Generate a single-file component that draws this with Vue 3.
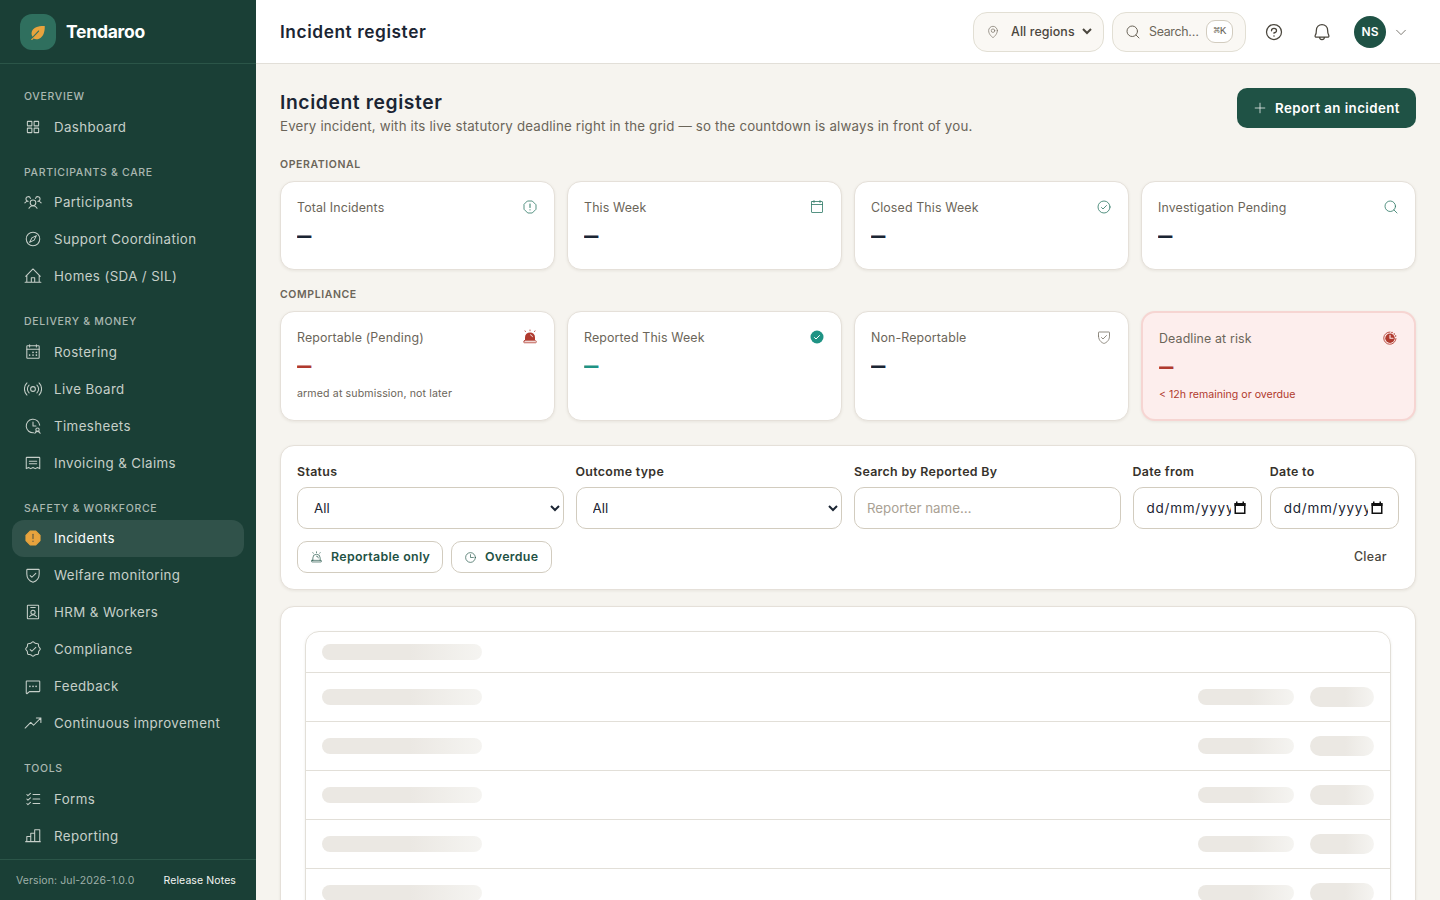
<script setup>
import { ref } from 'vue'

// icons, drawn on a 256 grid
const icons = {
  leaf: '<path d="M224 42C138 38 62 63 42 116c-11 29-5 55 8 79l80-84c9-9 20 1 12 10L56 208l-21 21c-8 9 2 19 11 11l18-18c24 13 53 13 79 2C203 198 227 124 224 42Z" fill="currentColor" stroke="none"/>',
  grid: '<rect x="48" y="48" width="64" height="64" rx="6"/><rect x="144" y="48" width="64" height="64" rx="6"/><rect x="48" y="144" width="64" height="64" rx="6"/><rect x="144" y="144" width="64" height="64" rx="6"/>',
  users: '<circle cx="128" cy="140" r="40"/><path d="M196 116a59.8 59.8 0 0 1 48 24M12 140a59.8 59.8 0 0 1 48-24M70.4 216a64.1 64.1 0 0 1 115.2 0M60 116a32 32 0 1 1 31.4-38M164.6 78A32 32 0 1 1 196 116"/>',
  compass: '<circle cx="128" cy="128" r="96"/><path d="M176 80l-32 64-64 32 32-64Z"/>',
  home: '<path d="M16 216h224M152 216v-64h-48v64M40 216V116M216 216V116M24 132 128 28l104 104"/>',
  calendarDots: '<rect x="40" y="40" width="176" height="176" rx="8"/><path d="M176 24v32M80 24v32M40 88h176"/><g fill="currentColor" stroke="none"><circle cx="128" cy="132" r="12"/><circle cx="176" cy="132" r="12"/><circle cx="80" cy="172" r="12"/><circle cx="128" cy="172" r="12"/><circle cx="176" cy="172" r="12"/></g>',
  broadcast: '<circle cx="128" cy="128" r="34"/><path d="M184 72a78 78 0 0 1 0 112M72 184a78 78 0 0 1 0-112M214 42a122 122 0 0 1 0 172M42 214a122 122 0 0 1 0-172"/>',
  clockUser: '<path d="M128 72v56h42M223 116A96 96 0 1 0 136 224"/><circle cx="192" cy="180" r="24"/><path d="M154 232a40 40 0 0 1 76 0"/>',
  receipt: '<path d="M76 104h104M76 140h104M32 208V56a8 8 0 0 1 8-8h176a8 8 0 0 1 8 8v152l-32-16-32 16-32-16-32 16-32-16Z"/>',
  octagonFill: '<path d="M91 28h74l63 63v74l-63 63H91l-63-63V91Z" fill="currentColor" stroke="currentColor"/><g stroke="#6b5f42" stroke-width="18"><path d="M128 76v60"/><path d="M128 174v2"/></g>',
  octagon: '<path d="M92 32h72l60 60v72l-60 60H92l-60-60V92Z"/><path d="M128 80v56M128 172v3" stroke-width="16"/>',
  shield: '<path d="M40 114V56a8 8 0 0 1 8-8h160a8 8 0 0 1 8 8v58c0 84-71 112-88 118-17-6-88-34-88-118Z"/><path d="m88 136 24 24 56-56"/>',
  badge: '<rect x="48" y="32" width="160" height="192" rx="8"/><circle cx="128" cy="132" r="30"/><path d="M96 64h64M80 192a58 58 0 0 1 96 0"/>',
  seal: '<path d="M54.500 201.500c-9.200-9.200-3.100-28.500-7.800-39.800S24 140.500 24 128s17.800-22 22.700-33.700-1.400-30.600 7.800-39.800S83 51.400 94.300 46.700 115.500 24 128 24s22 17.800 33.700 22.700 30.600-1.400 39.800 7.800 3.100 28.500 7.800 39.800S232 115.500 232 128s-17.800 22-22.700 33.700 1.400 30.600-7.800 39.800-28.500 3.100-39.800 7.800S140.500 232 128 232s-22-17.800-33.700-22.700-30.600 1.400-39.800-7.800Z"/><path d="m88 136 24 24 56-56"/>',
  chat: '<path d="m77 208-32 27a8 8 0 0 1-13-6V64a8 8 0 0 1 8-8h176a8 8 0 0 1 8 8v136a8 8 0 0 1-8 8Z"/><g fill="currentColor" stroke="none"><circle cx="84" cy="132" r="12"/><circle cx="128" cy="132" r="12"/><circle cx="172" cy="132" r="12"/></g>',
  trend: '<path d="m16 200 80-80 40 40 104-104M176 56h64v64"/>',
  checks: '<path d="M128 64h96M128 128h96M128 192h96M92 48 56 80 40 64M92 112l-36 32-16-16M92 176l-36 32-16-16"/>',
  bars: '<path d="M40 208v-72h56M96 208V88h56M224 208V40h-72v168M24 208h208"/>',
  calendar: '<rect x="40" y="40" width="176" height="176" rx="8"/><path d="M176 24v32M80 24v32M40 88h176"/>',
  check: '<circle cx="128" cy="128" r="96"/><path d="m88 136 24 24 56-56"/>',
  checkFill: '<circle cx="128" cy="128" r="104" fill="currentColor" stroke="none"/><path d="m88 136 24 24 56-56" stroke="#fff" stroke-width="16"/>',
  search: '<circle cx="116" cy="116" r="84"/><path d="m175 175 49 49"/>',
  siren: '<path d="M56 184v-48a72 72 0 0 1 144 0v48M128 100a36 36 0 0 1 36 36M128 16v16M200 32l-8 12M56 32l8 12"/><rect x="32" y="184" width="192" height="32" rx="8"/>',
  sirenFill: '<path d="M48 180v-46a80 80 0 0 1 160 0v46Z" fill="currentColor" stroke="none"/><path d="M136 92a40 40 0 0 1 32 32" stroke="#fff"/><path d="M128 16v12M208 30l-8 12M48 30l8 12"/><rect x="28" y="188" width="200" height="32" rx="10"/>',
  clock: '<circle cx="128" cy="128" r="96"/><path d="M128 72v56h56"/>',
  countdown: '<circle cx="128" cy="132" r="76" fill="currentColor" stroke="none"/><path d="M128 32a98 98 0 1 0 96 104" stroke-width="14"/><path d="M128 84v48h48" stroke="#fdecec" stroke-width="18"/><g fill="currentColor" stroke="none"><circle cx="160" cy="38" r="12"/><circle cx="196" cy="62" r="12"/><circle cx="218" cy="97" r="12"/></g>',
  pin: '<circle cx="128" cy="104" r="32"/><path d="M208 104c0 72-80 128-80 128s-80-56-80-128a80 80 0 0 1 160 0Z"/>',
  help: '<circle cx="128" cy="128" r="96"/><path d="M128 144v-8c18 0 32-13 32-28s-14-28-32-28-32 13-32 28v4"/><circle cx="128" cy="180" r="10" fill="currentColor" stroke="none"/>',
  bell: '<path d="M96 192a32 32 0 0 0 64 0M56 104a72 72 0 0 1 144 0c0 36 8 57 15 68 4 7-1 20-7 20H48c-6 0-11-13-7-20 8-11 15-32 15-68Z"/>',
  caret: '<path d="m208 96-80 80-80-80"/>',
  plus: '<path d="M40 128h176M128 40v176"/>',
}

const groups = [
  { title: 'Overview', items: [{ name: 'Dashboard', icon: 'grid' }] },
  {
    title: 'Participants & Care',
    items: [
      { name: 'Participants', icon: 'users' },
      { name: 'Support Coordination', icon: 'compass' },
      { name: 'Homes (SDA / SIL)', icon: 'home' },
    ],
  },
  {
    title: 'Delivery & Money',
    items: [
      { name: 'Rostering', icon: 'calendarDots' },
      { name: 'Live Board', icon: 'broadcast' },
      { name: 'Timesheets', icon: 'clockUser' },
      { name: 'Invoicing & Claims', icon: 'receipt' },
    ],
  },
  {
    title: 'Safety & Workforce',
    items: [
      { name: 'Incidents', icon: 'octagonFill' },
      { name: 'Welfare monitoring', icon: 'shield' },
      { name: 'HRM & Workers', icon: 'badge' },
      { name: 'Compliance', icon: 'seal' },
      { name: 'Feedback', icon: 'chat' },
      { name: 'Continuous improvement', icon: 'trend' },
    ],
  },
  {
    title: 'Tools',
    items: [
      { name: 'Forms', icon: 'checks' },
      { name: 'Reporting', icon: 'bars' },
    ],
  },
]

const operational = [
  { label: 'Total Incidents', icon: 'octagon' },
  { label: 'This Week', icon: 'calendar' },
  { label: 'Closed This Week', icon: 'check' },
  { label: 'Investigation Pending', icon: 'search' },
]

const compliance = [
  { label: 'Reportable (Pending)', icon: 'sirenFill', tone: 'danger', hint: 'armed at submission, not later' },
  { label: 'Reported This Week', icon: 'checkFill', tone: 'success' },
  { label: 'Non-Reportable', icon: 'shield', tone: 'neutral' },
  { label: 'Deadline at risk', icon: 'countdown', tone: 'risk', hint: '< 12h remaining or overdue' },
]

const active = ref('Incidents')
const region = ref('All regions')
const status = ref('All')
const outcome = ref('All')
const reporter = ref('')

function clear() {
  status.value = 'All'
  outcome.value = 'All'
  reporter.value = ''
}
</script>

<template>
  <div class="shell">
    <aside class="sidebar">
      <div class="brand">
        <span class="logo"><svg class="icon" viewBox="0 0 256 256" v-html="icons.leaf"></svg></span>
        <span class="brand-name">Tendaroo</span>
      </div>
      <nav class="nav">
        <section v-for="group in groups" :key="group.title" class="group">
          <h2 class="group-title">{{ group.title }}</h2>
          <a
            v-for="item in group.items"
            :key="item.name"
            class="nav-item"
            :class="{ active: item.name === active }"
            @click="active = item.name"
          >
            <svg class="icon" viewBox="0 0 256 256" v-html="icons[item.icon]"></svg>
            <span>{{ item.name }}</span>
          </a>
        </section>
      </nav>
      <footer class="version">
        <span>Version: Jul-2026-1.0.0</span>
        <a class="notes">Release Notes</a>
      </footer>
    </aside>

    <div class="body">
      <header class="topbar">
        <div class="topbar-title">Incident register</div>
        <div class="tools">
          <div class="pill region">
            <svg class="icon" viewBox="0 0 256 256" v-html="icons.pin"></svg>
            <select v-model="region"><option>All regions</option></select>
          </div>
          <button class="pill search">
            <svg class="icon" viewBox="0 0 256 256" v-html="icons.search"></svg>
            <span>Search…</span>
            <kbd>⌘K</kbd>
          </button>
          <button class="round"><svg class="icon" viewBox="0 0 256 256" v-html="icons.help"></svg></button>
          <button class="round"><svg class="icon" viewBox="0 0 256 256" v-html="icons.bell"></svg></button>
          <button class="account">
            <span class="avatar">NS</span>
            <svg class="icon" viewBox="0 0 256 256" v-html="icons.caret"></svg>
          </button>
        </div>
      </header>

      <main class="page">
        <div class="heading">
          <div>
            <h1>Incident register</h1>
            <p>Every incident, with its live statutory deadline right in the grid — so the countdown is always in front of you.</p>
          </div>
          <button class="primary">
            <svg class="icon" viewBox="0 0 256 256" v-html="icons.plus"></svg>
            <span>Report an incident</span>
          </button>
        </div>

        <h3 class="section-title">Operational</h3>
        <div class="cards first">
          <div v-for="card in operational" :key="card.label" class="card">
            <div class="card-top">
              <span class="card-label">{{ card.label }}</span>
              <svg class="icon" viewBox="0 0 256 256" v-html="icons[card.icon]"></svg>
            </div>
            <div class="value"><span class="dash">—</span></div>
          </div>
        </div>

        <h3 class="section-title">Compliance</h3>
        <div class="cards second">
          <div v-for="card in compliance" :key="card.label" class="card" :class="card.tone">
            <div class="card-top">
              <span class="card-label">{{ card.label }}</span>
              <svg class="icon" viewBox="0 0 256 256" v-html="icons[card.icon]"></svg>
            </div>
            <div class="value"><span class="dash">—</span></div>
            <div v-if="card.hint" class="hint">{{ card.hint }}</div>
          </div>
        </div>

        <div class="panel filters">
          <div class="fields">
            <label class="field">
              <span class="field-label">Status</span>
              <select v-model="status" class="control"><option>All</option></select>
            </label>
            <label class="field">
              <span class="field-label">Outcome type</span>
              <select v-model="outcome" class="control"><option>All</option></select>
            </label>
            <label class="field">
              <span class="field-label">Search by Reported By</span>
              <input v-model="reporter" class="control" placeholder="Reporter name…" />
            </label>
            <div class="dates">
              <div v-for="name in ['Date from', 'Date to']" :key="name" class="field">
                <span class="field-label">{{ name }}</span>
                <div class="control date">
                  <span class="date-text">dd/mm/yyyy</span>
                  <svg class="picker" viewBox="0 0 14 14">
                    <path d="M2.250 3h9.500v9.250h-9.500z" />
                    <path d="M1.500 2h11v3h-11zM3 .5h1.500V2H3zM9.500.5H11V2H9.500z" class="solid" />
                  </svg>
                </div>
              </div>
            </div>
          </div>
          <div class="actions">
            <button class="chip">
              <svg class="icon" viewBox="0 0 256 256" v-html="icons.siren"></svg>
              <span>Reportable only</span>
            </button>
            <button class="chip overdue">
              <svg class="icon" viewBox="0 0 256 256" v-html="icons.clock"></svg>
              <span>Overdue</span>
            </button>
            <button class="clear" @click="clear">Clear</button>
          </div>
        </div>

        <div class="panel results">
          <!-- loading rows -->
          <div class="table">
            <div class="row head"><span class="bone wide"></span></div>
            <div v-for="n in 8" :key="n" class="row">
              <span class="bone wide"></span>
              <span class="bone mid"></span>
              <span class="bone tag"></span>
            </div>
          </div>
        </div>
      </main>
    </div>
  </div>
</template>

<style>
body {
  margin: 0;
  overflow: hidden;
}
</style>

<style scoped>
.shell {
  display: flex;
  height: 100vh;
  overflow: hidden;
  background: #f6f4ef;
  color: #1b2533;
  font-family: Inter, "Liberation Sans", sans-serif;
  font-size: 13.3px;
}

.shell * {
  box-sizing: border-box;
}

button,
select,
input {
  font: inherit;
  letter-spacing: inherit;
  color: inherit;
}

button {
  border: 0;
  padding: 0;
  background: none;
}

.icon {
  flex: none;
  width: 18px;
  height: 18px;
  fill: none;
  stroke: currentColor;
  stroke-width: 13;
  stroke-linecap: round;
  stroke-linejoin: round;
}

/* sidebar */
.sidebar {
  flex: none;
  display: flex;
  flex-direction: column;
  width: 256px;
  background: #1a3f36;
  color: #c6cfc9;
}

.brand {
  flex: none;
  display: flex;
  align-items: center;
  gap: 10px;
  height: 64px;
  padding: 0 20px;
  border-bottom: 1px solid #2b5548;
}

.logo {
  display: flex;
  align-items: center;
  justify-content: center;
  width: 36px;
  height: 36px;
  border-radius: 12px;
  background: #2f6f5e;
  color: #e8a33d;
}

.brand-name {
  color: #fff;
  font-size: 17.5px;
  font-weight: 700;
  letter-spacing: -0.25px;
}

.nav {
  flex: 1;
  min-height: 0;
  overflow: hidden;
  padding: 24.1px 12px 0;
}

.group {
  margin-bottom: 18.5px;
}

.group-title {
  margin: 0 0 2.9px;
  padding-left: 12px;
  font-size: 10.5px;
  font-weight: 500;
  line-height: 17.2px;
  letter-spacing: 0.68px;
  text-transform: uppercase;
  color: #aab8b1;
}

.nav-item {
  display: flex;
  align-items: center;
  gap: 12px;
  height: 37px;
  padding: 0 12px;
  border-radius: 12px;
  letter-spacing: 0.4px;
}

.nav-item .icon {
  stroke-width: 15;
}

.nav-item.active {
  background: #30524a;
  color: #fff;
}

.nav-item.active .icon {
  color: #e8a33d;
}

.version {
  flex: none;
  display: flex;
  align-items: center;
  justify-content: space-between;
  height: 41px;
  padding: 0 20px 0 16px;
  border-top: 1px solid #2b5548;
  font-size: 10.5px;
  letter-spacing: 0.1px;
  color: #9fb0a9;
}

.notes {
  color: #f3f5f2;
}

/* header */
.body {
  flex: 1;
  min-width: 0;
}

.topbar {
  display: flex;
  align-items: center;
  justify-content: space-between;
  height: 64px;
  padding: 0 24px;
  background: #fff;
  border-bottom: 1px solid #e2dfd8;
}

.topbar-title {
  font-size: 17.3px;
  font-weight: 600;
  letter-spacing: 0.58px;
}

.tools {
  display: flex;
  align-items: center;
  gap: 8px;
  color: #4a463d;
}

.pill {
  display: flex;
  align-items: center;
  height: 40px;
  border: 1px solid #e2dfd4;
  border-radius: 14px;
  background: #faf8f4;
  font-size: 12.4px;
}

.region {
  width: 131px;
  padding-left: 12px;
  font-weight: 500;
}

.region .icon {
  width: 14px;
  height: 14px;
  margin-right: 7px;
  color: #7a7468;
}

.region select {
  width: 88px;
  border: 0;
  background: transparent;
  letter-spacing: 0.1px;
}

.search {
  width: 134px;
  padding: 0 12px;
  color: #6b6559;
  letter-spacing: -0.3px;
}

.search .icon {
  width: 16px;
  height: 16px;
  margin-right: 8px;
  stroke-width: 16;
}

.search kbd {
  margin-left: auto;
  padding: 0 6px;
  border: 1px solid #d2ccbf;
  border-radius: 9px;
  background: #fff;
  font: 11px/21px "Liberation Mono", "DejaVu Sans Mono", monospace;
}

.round {
  display: flex;
  align-items: center;
  justify-content: center;
  width: 40px;
  height: 40px;
}

.round .icon {
  width: 20px;
  height: 20px;
  stroke-width: 16;
}

.account {
  display: flex;
  align-items: center;
  gap: 8px;
  padding: 0 8px 0 4px;
}

.avatar {
  width: 32px;
  height: 32px;
  border-radius: 50%;
  background: #1f5245;
  color: #fff;
  font-size: 12px;
  font-weight: 600;
  line-height: 32px;
  text-align: center;
}

.account .icon {
  width: 14px;
  height: 14px;
}

/* page */
.page {
  padding: 24px;
}

.heading {
  display: flex;
  justify-content: space-between;
  height: 67px;
}

.heading h1 {
  margin: 0;
  padding-top: 1px;
  font-size: 19.3px;
  font-weight: 600;
  line-height: 27px;
  letter-spacing: 0.6px;
}

.heading p {
  margin: 0;
  font-size: 13.3px;
  line-height: 21px;
  letter-spacing: 0.17px;
  color: #6b6559;
}

.primary {
  display: flex;
  align-items: center;
  gap: 8px;
  height: 40px;
  padding: 0 16px;
  border-radius: 10px;
  background: #1f5245;
  color: #fff;
  font-weight: 600;
  letter-spacing: 0.43px;
}

.primary .icon {
  width: 14px;
  height: 14px;
}

.section-title {
  margin: 0;
  padding: 1px 0 8px;
  font-size: 10.5px;
  font-weight: 600;
  line-height: 17px;
  letter-spacing: 0.6px;
  text-transform: uppercase;
  color: #6b6559;
}

.cards {
  display: grid;
  grid-template-columns: repeat(4, 1fr);
  gap: 12px;
}

.first {
  grid-template-rows: 89px;
  margin-bottom: 15px;
}

.second {
  grid-template-rows: 110px;
  margin-bottom: 24px;
}

.card,
.panel {
  border: 1px solid #e5e0d9;
  border-radius: 14px;
  background: #fff;
  box-shadow: 0 1px 3px rgba(60, 50, 30, 0.08);
}

.card {
  padding: 16px;
}

.card-top {
  display: flex;
  justify-content: space-between;
  height: 20px;
  color: #2f7a66;
}

.card-label {
  font-size: 12.4px;
  line-height: 20px;
  letter-spacing: 0.13px;
  color: #6b6559;
}

.card-top .icon {
  width: 16px;
  height: 16px;
  margin-top: 1px;
}

.value {
  height: 36px;
  color: #1b2533;
  font-size: 24px;
  font-weight: 600;
  line-height: 36px;
}

.dash {
  display: inline-block;
  transform: scaleX(0.6);
  transform-origin: left;
}

.hint {
  font-size: 10.6px;
  line-height: 19px;
  letter-spacing: 0.13px;
  color: #6b6559;
}

.danger .icon,
.danger .value {
  color: #b03a2e;
}

.success .icon,
.success .value {
  color: #1f9384;
}

.neutral .icon {
  color: #7a7468;
}

.risk {
  border: 2px solid #f6d5d2;
  background: #fdeeed;
}

.risk .icon,
.risk .value,
.risk .hint {
  color: #b03a2e;
}

.risk .hint {
  letter-spacing: 0;
}

/* filters */
.filters {
  height: 145px;
  padding: 16px;
  margin-bottom: 16px;
}

.fields {
  display: grid;
  grid-template-columns: repeat(4, 1fr);
  gap: 12px;
}

.field {
  display: block;
  min-width: 0;
}

.field-label {
  display: block;
  height: 25px;
  font-size: 12.4px;
  font-weight: 600;
  line-height: 19px;
  letter-spacing: 0.32px;
  color: #36322b;
}

.control {
  display: block;
  width: 100%;
  height: 42px;
  padding: 0 12px;
  border: 1px solid #d2ccbf;
  border-radius: 10px;
  background: #fff;
}

.control::placeholder {
  color: #aaa294;
}

.dates {
  display: grid;
  grid-template-columns: 1fr 1fr;
  gap: 8px;
}

.date {
  display: flex;
  align-items: center;
}

.date-text {
  width: 85px;
  padding-left: 1px;
  overflow: hidden;
  font-size: 13.5px;
  letter-spacing: 0.75px;
}

.picker {
  width: 14px;
  height: 14px;
  margin: -1px 0 0 2px;
  fill: none;
  stroke: #111;
  stroke-width: 1.5;
}

.picker .solid {
  fill: #111;
  stroke: none;
}

.actions {
  display: flex;
  align-items: center;
  gap: 8px;
  margin-top: 12px;
}

.chip {
  display: flex;
  align-items: center;
  gap: 8px;
  width: 146px;
  height: 32px;
  padding: 0 11px 0 12px;
  border: 1px solid #d2ccbf;
  border-radius: 10px;
  background: #fff;
  color: #1f5245;
  font-size: 12.4px;
  font-weight: 600;
  letter-spacing: 0.32px;
  white-space: nowrap;
}

.chip span {
  padding-bottom: 1px;
}

.overdue {
  width: 101px;
}

.chip .icon {
  width: 13px;
  height: 13px;
}

.clear {
  margin-left: auto;
  padding: 0 12px 1px;
  color: #4a463d;
  font-size: 12.4px;
  font-weight: 500;
  letter-spacing: 0.33px;
}

/* skeleton */
.results {
  padding: 24px;
}

.table {
  border: 1px solid #e2dfd8;
  border-radius: 14px;
  box-shadow: 0 1px 3px rgba(60, 50, 30, 0.08);
}

.row {
  display: flex;
  align-items: center;
  gap: 16px;
  height: 49px;
  padding: 0 16px;
  border-bottom: 1px solid #e2dfd8;
}

.row.head {
  height: 41px;
}

.bone {
  height: 16px;
  border-radius: 10px;
  background: linear-gradient(90deg, #ebe8e3 0%, #ebe8e3 55%, #f5f4f1 100%);
}

.wide {
  width: 160px;
  margin-right: auto;
}

.mid {
  width: 96px;
}

.tag {
  width: 64px;
  height: 20px;
}
</style>
